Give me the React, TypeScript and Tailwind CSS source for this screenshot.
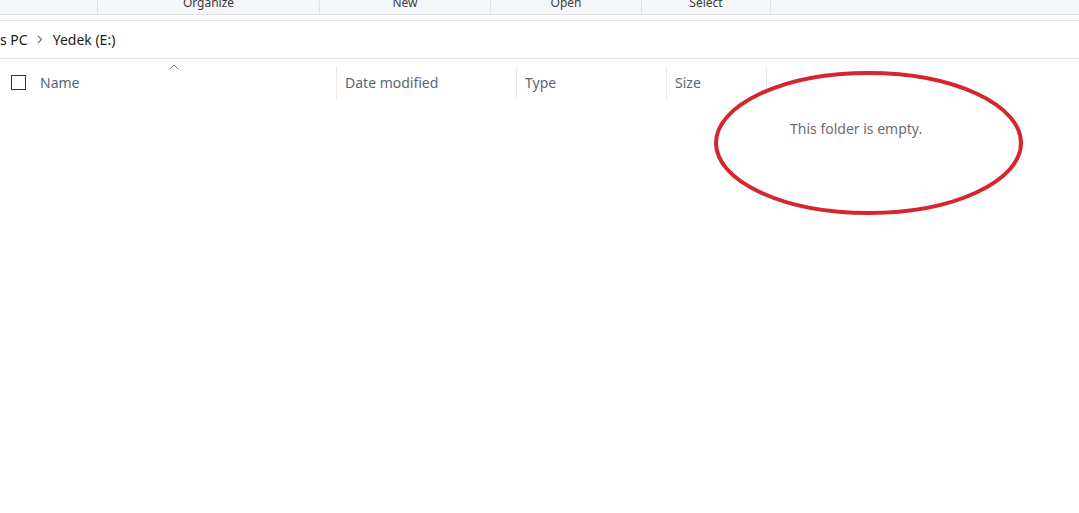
import React from "react";

const font = { fontFamily: '"Noto Sans", "Open Sans", sans-serif' };

function Cell({ w, label, last }: { w: string; label?: string; last?: boolean }) {
  return (
    <div className={`${w} h-full flex justify-center relative ${last ? "" : "border-r border-[#e3e4e6]"}`}>
      {label && (
        <span className="text-[12px] leading-[16px] text-[#3b3b3b] mt-[-5px]">{label}</span>
      )}
    </div>
  );
}

function HeaderCol({ w, label, sep = true }: { w: string; label: string; sep?: boolean }) {
  return (
    <div className={`${w} h-[33px] flex items-center pl-[8px] ${sep ? "border-r border-[#e8e8e8]" : ""}`}>
      <span className="text-[14px] text-[#5b6772]">{label}</span>
    </div>
  );
}

export default function App() {
  return (
    <div className="w-[1079px] h-[513px] bg-white relative overflow-hidden" style={font}>
      {/* command bar */}
      <div className="h-[15px] bg-[#f5f6f8] border-b border-[#e1e2e4] flex overflow-hidden">
        <Cell w="w-[98px]" />
        <Cell w="w-[222px]" label="Organize" />
        <Cell w="w-[171px]" label="New" />
        <Cell w="w-[151px]" label="Open" />
        <Cell w="w-[129px]" label="Select" />
        <Cell w="flex-1" last />
      </div>
      <div className="h-[5px]" />
      {/* address bar */}
      <div className="h-[39px] border-t border-b border-[#e5e5e5] flex items-center">
        <span className="text-[14px] text-[#1b1b1b] mt-[-1px]">s PC</span>
        <svg className="ml-[9px] mr-[10px]" width="6" height="9" viewBox="0 0 6 9">
          <path d="M1 1 L4.5 4.5 L1 8" fill="none" stroke="#707070" strokeWidth="1.1" />
        </svg>
        <span className="text-[14px] text-[#1b1b1b] mt-[-1px]">Yedek (E:)</span>
      </div>
      {/* column headers */}
      <div className="flex pt-[7px]">
        <div className="w-[337px] h-[33px] flex items-center border-r border-[#e8e8e8] relative">
          <div className="ml-[11px] w-[15px] h-[15px] border border-[#333333] bg-white" />
          <span className="ml-[14px] text-[14px] text-[#5b6772]">Name</span>
          <svg className="absolute left-[169px] top-[-2px]" width="10" height="6" viewBox="0 0 10 6">
            <path d="M1 5 L5 1 L9 5" fill="none" stroke="#6f6f6f" strokeWidth="1" />
          </svg>
        </div>
        <HeaderCol w="w-[180px]" label="Date modified" />
        <HeaderCol w="w-[150px]" label="Type" />
        <HeaderCol w="w-[100px]" label="Size" />
      </div>
      {/* empty message */}
      <div className="flex">
        <div className="ml-[790px] mt-[19px] text-[14px] text-[#6d6d6d]">This folder is empty.</div>
      </div>
      {/* red annotation ellipse */}
      <svg className="absolute left-0 top-0 pointer-events-none" width="1079" height="513">
        <ellipse cx="868.5" cy="143" rx="152.5" ry="70" fill="none" stroke="#d6262d" strokeWidth="4" />
      </svg>
    </div>
  );
}
